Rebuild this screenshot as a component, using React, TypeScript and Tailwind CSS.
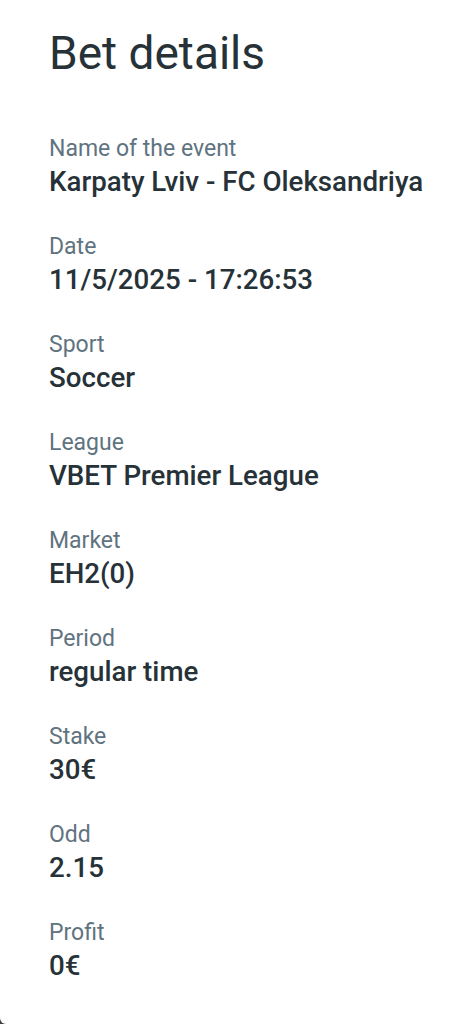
import React from "react";

const rows: [string, string][] = [
  ["Name of the event", "Karpaty Lviv - FC Oleksandriya"],
  ["Date", "11/5/2025 - 17:26:53"],
  ["Sport", "Soccer"],
  ["League", "VBET Premier League"],
  ["Market", "EH2(0)"],
  ["Period", "regular time"],
  ["Stake", "30€"],
  ["Odd", "2.15"],
  ["Profit", "0€"],
];

export default function App() {
  return (
    <div className="w-[468px] h-[1024px] bg-[#3a3f44] overflow-hidden" style={{ fontFamily: "Roboto, 'Noto Sans', sans-serif" }}>
      <div className="w-full h-full bg-white rounded-bl-[6px] px-[49px] pt-[25px]">
        <h1 className="text-[46px] leading-[56px] font-normal text-[#263238]">Bet details</h1>
        <div className="mt-[55px] flex flex-col gap-[35px]">
          {rows.map(([label, value]) => (
            <div key={label} className="flex flex-col gap-[3px]">
              <div className="text-[23px] leading-[26px] text-[#5f7380] whitespace-nowrap">{label}</div>
              <div className="text-[27.7px] leading-[34px] font-medium text-[#263238] whitespace-nowrap">{value}</div>
            </div>
          ))}
        </div>
      </div>
    </div>
  );
}
